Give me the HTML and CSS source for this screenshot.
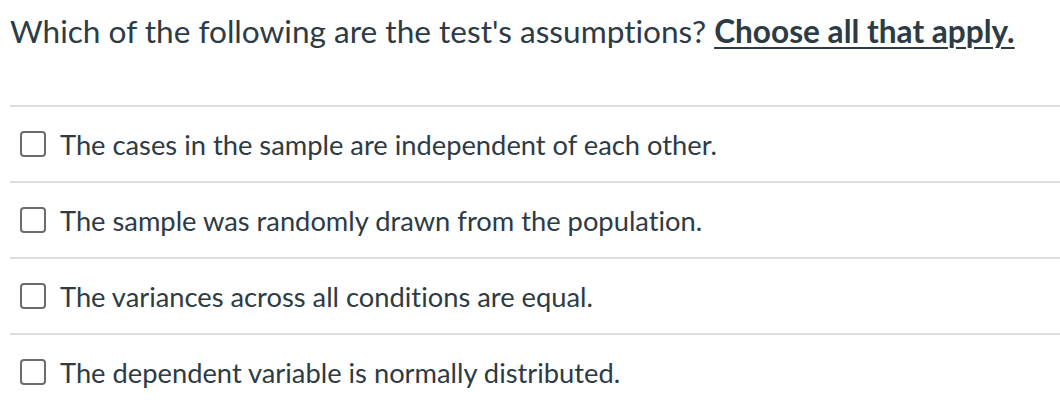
FILE: index.html
```html
<!DOCTYPE html>
<html>
<head>
<meta charset="utf-8">
<link rel="stylesheet" href="styles.css">
</head>
<body>
<div class="question">
  <div class="prompt">Which of the following are the test's assumptions? <strong class="emph">Choose all that apply.</strong></div>
  <div class="answers">
    <label class="answer"><span class="box"></span><span class="text">The cases in the sample are independent of each other.</span></label>
    <label class="answer"><span class="box"></span><span class="text">The sample was randomly drawn from the population.</span></label>
    <label class="answer"><span class="box"></span><span class="text">The variances across all conditions are equal.</span></label>
    <label class="answer"><span class="box"></span><span class="text">The dependent variable is normally distributed.</span></label>
  </div>
</div>
</body>
</html>
```
FILE: styles.css
```css
html, body {
  margin: 0;
  padding: 0;
  background: #fff;
}
body {
  font-family: Lato, "Noto Sans", sans-serif;
  color: #2d3b45;
  font-variant-ligatures: none;
}
.question {
  padding-left: 10px;
}
.prompt {
  font-size: 31.6px;
  line-height: 36px;
  padding-top: 13px;
  height: 92px;
  white-space: nowrap;
}
.emph {
  font-weight: 700;
  text-decoration: underline;
  text-decoration-thickness: 2px;
  text-underline-offset: 4px;
}
.answers {
  border-top: 2px solid #dddddd;
}
.answer {
  display: flex;
  align-items: center;
  height: 74px;
  border-bottom: 2px solid #dddddd;
  padding-left: 10px;
  gap: 14px;
}
.answer:last-child {
  border-bottom: none;
}
.box {
  width: 22px;
  height: 22px;
  border: 2px solid #6c6c6c;
  border-radius: 4px;
  flex: none;
}
.text {
  font-size: 27.3px;
  white-space: nowrap;
}
```
